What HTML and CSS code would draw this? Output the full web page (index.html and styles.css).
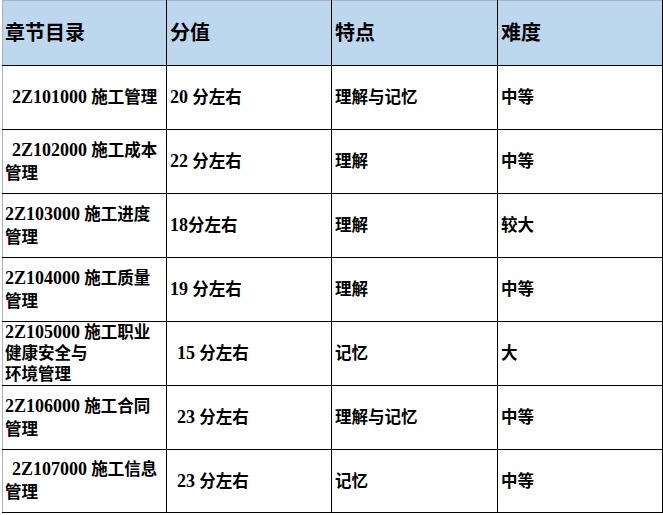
FILE: index.html
```html
<!DOCTYPE html>
<html lang="zh-CN">
<head>
<meta charset="utf-8">
<title>章节目录</title>
<link rel="stylesheet" href="styles.css">
</head>
<body>
<table class="grid">
  <colgroup>
    <col class="c1"><col class="c2"><col class="c3"><col class="c4">
  </colgroup>
  <thead>
    <tr class="head">
      <th>章节目录</th><th>分值</th><th>特点</th><th>难度</th>
    </tr>
  </thead>
  <tbody>
    <tr>
      <td><span class="ind"><span class="num">2Z101000</span> 施工管理</span></td>
      <td><span class="num">20</span> 分左右</td><td>理解与记忆</td><td>中等</td>
    </tr>
    <tr>
      <td><span class="ind"><span class="num">2Z102000</span> 施工成本</span><br>管理</td>
      <td><span class="num">22</span> 分左右</td><td>理解</td><td>中等</td>
    </tr>
    <tr>
      <td><span class="num">2Z103000</span> 施工进度<br>管理</td>
      <td><span class="num">18</span>分左右</td><td>理解</td><td>较大</td>
    </tr>
    <tr>
      <td><span class="num">2Z104000</span> 施工质量<br>管理</td>
      <td><span class="num">19</span> 分左右</td><td>理解</td><td>中等</td>
    </tr>
    <tr class="tight">
      <td><span class="num">2Z105000</span> 施工职业<br>健康安全与<br>环境管理</td>
      <td><span class="ind"><span class="num">15</span> 分左右</span></td><td>记忆</td><td>大</td>
    </tr>
    <tr>
      <td><span class="num">2Z106000</span> 施工合同<br>管理</td>
      <td><span class="ind"><span class="num">23</span> 分左右</span></td><td>理解与记忆</td><td>中等</td>
    </tr>
    <tr class="last">
      <td><span class="ind"><span class="num">2Z107000</span> 施工信息</span><br>管理</td>
      <td><span class="ind"><span class="num">23</span> 分左右</span></td><td>记忆</td><td>中等</td>
    </tr>
  </tbody>
</table>
</body>
</html>
```

FILE: styles.css
```css
html, body {
  margin: 0;
  padding: 0;
  background: #ffffff;
}

.grid {
  margin-left: 2px;
  width: 660px;
  table-layout: fixed;
  border-collapse: collapse;
  font-family: "Liberation Serif", "Noto Sans CJK SC", serif;
  font-weight: 700;
  color: #000;
  border-top: 1px solid #a7b3c4;
  border-left: 1px solid #a7b3c4;
  border-right: 1px solid #000;
  border-bottom: 1px solid #000;
}

.c1 { width: 164px; }
.c2 { width: 165px; }
.c3 { width: 166px; }
.c4 { width: 165px; }

.grid th,
.grid td {
  border: 1px solid #000;
  padding: 0 0 0 3px;
  text-align: left;
  vertical-align: middle;
  white-space: nowrap;
}

.grid th:first-child,
.grid td:first-child {
  border-left: 1px solid #a7b3c4;
  padding-left: 2px;
}

.head th {
  border-top: 1px solid #a7b3c4;
  background: #bdd7ee;
  height: 64px;
  font-size: 20px;
  line-height: 24px;
}

.grid td {
  height: 63px;
  font-size: 16.5px;
  line-height: 23px;
}

.grid .tight td {
  line-height: 21px;
}

.grid .last td {
  height: 62px;
}

.num {
  font-size: 18px;
}

.ind {
  padding-left: 7px;
}
```
